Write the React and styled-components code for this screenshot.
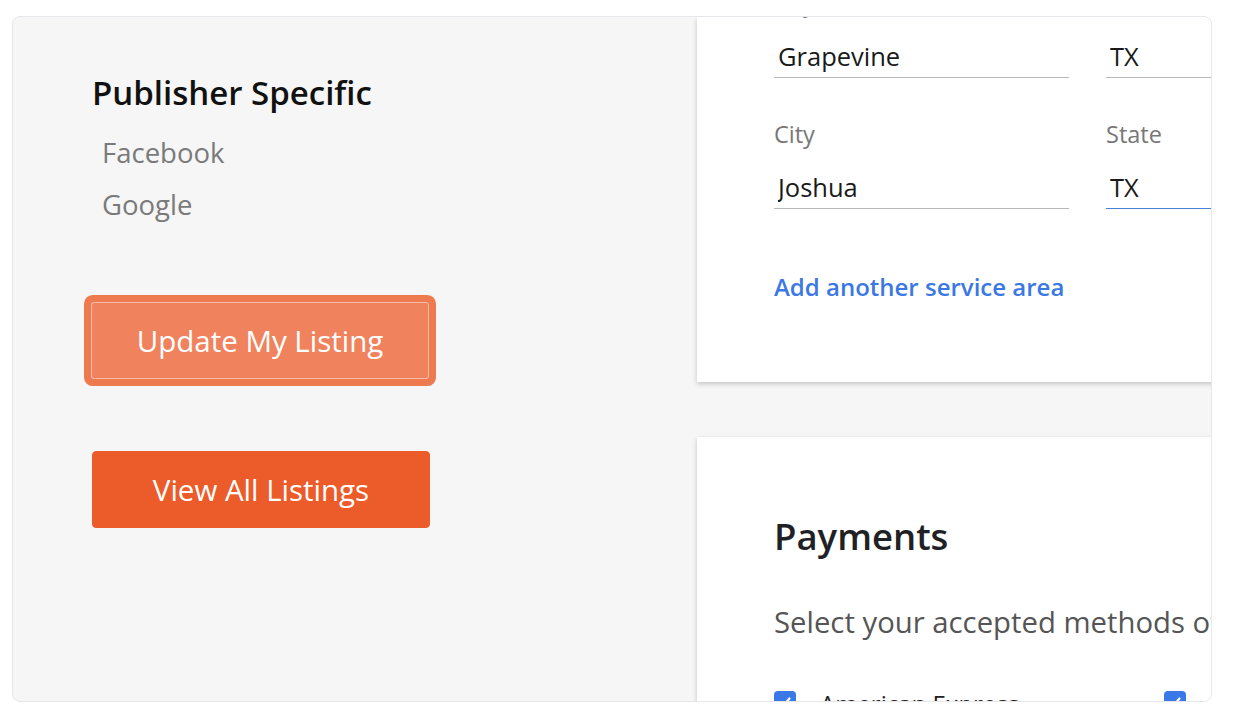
import React from 'react';
import styled, { createGlobalStyle } from 'styled-components';

const GlobalStyle = createGlobalStyle`
    html, body {
        margin: 0;
        padding: 0;
        background: #ffffff;
        font-family: "Open Sans", "Noto Sans", sans-serif;
    }
    * {
        box-sizing: border-box;
    }
`;

const serviceAreas = [
    { city: 'Grapevine', state: 'TX' },
    { city: 'Joshua', state: 'TX', focused: true },
];

const publishers = ['Facebook', 'Google'];

const paymentMethods = [
    ['American Express', 'Cash'],
];

const Check = () => (
    <svg width="14" height="14" viewBox="0 0 14 14" fill="none">
        <path d="M2.5 7.5l3 3 6-7" stroke="#fff" strokeWidth="2.2" strokeLinecap="round" strokeLinejoin="round" />
    </svg>
);

const ServiceField = ({ label, value, focused }) => (
    <Field>
        <Label>{label}</Label>
        <UnderlineInput value={value} readOnly $focused={focused} />
    </Field>
);

const App = () => {
    return (
        <>
            <GlobalStyle />
            <Frame>
                <Sidebar>
                    <SectionTitle>Publisher Specific</SectionTitle>
                    <PublisherList>
                        {publishers.map((p) => (
                            <PublisherItem key={p}>{p}</PublisherItem>
                        ))}
                    </PublisherList>
                    <Button $focused>Update My Listing</Button>
                    <Button>View All Listings</Button>
                </Sidebar>
                <Content>
                    <Card>
                        <ScrolledBody>
                            {serviceAreas.map((area, i) => (
                                <FieldRow key={i}>
                                    <ServiceField label="City" value={area.city} />
                                    <ServiceField label="State" value={area.state} focused={area.focused} />
                                </FieldRow>
                            ))}
                            <AddLink href="#">Add another service area</AddLink>
                        </ScrolledBody>
                    </Card>
                    <Card $second>
                        <CardTitle>Payments</CardTitle>
                        <CardIntro>Select your accepted methods of payment</CardIntro>
                        {paymentMethods.map((row, i) => (
                            <CheckRow key={i}>
                                {row.map((m) => (
                                    <CheckItem key={m}>
                                        <CheckBox>
                                            <Check />
                                        </CheckBox>
                                        {m}
                                    </CheckItem>
                                ))}
                            </CheckRow>
                        ))}
                    </Card>
                </Content>
            </Frame>
        </>
    );
};

const Frame = styled.div`
    margin: 16px 0 0 12px;
    width: 1200px;
    height: 686px;
    border: 1px solid #e7e7eb;
    border-radius: 8px;
    background: #f6f6f6;
    overflow: hidden;
    display: flex;
`;

const Sidebar = styled.div`
    flex: 0 0 684px;
    padding: 55px 0 0 79px;
    display: flex;
    flex-direction: column;
    align-items: flex-start;
`;

const SectionTitle = styled.h2`
    margin: 0;
    font-size: 33px;
    line-height: 42px;
    font-weight: 600;
    color: #111;
`;

const PublisherList = styled.div`
    margin: 13px 0 0 10px;
    display: flex;
    flex-direction: column;
`;

const PublisherItem = styled.div`
    font-size: 27.5px;
    line-height: 52px;
    color: #7a7a7a;
`;

const Button = styled.button`
    width: 338px;
    height: 77px;
    margin-top: ${(p) => (p.$focused ? '71px' : '72px')};
    margin-left: ${(p) => (p.$focused ? '-1px' : '0')};
    border-radius: ${(p) => (p.$focused ? '3px' : '4px')};
    font-family: inherit;
    font-size: 29.5px;
    color: #fff;
    cursor: pointer;
    background: ${(p) => (p.$focused ? '#f0835e' : '#ec5b2a')};
    border: 1px solid ${(p) => (p.$focused ? 'rgba(255,255,255,0.45)' : '#ec5b2a')};
    box-shadow: ${(p) => (p.$focused ? '0 0 0 7px #ee7a50' : 'none')};
`;

const Content = styled.div`
    flex: 0 0 600px;
    display: flex;
    flex-direction: column;
    gap: 55px;
`;

const Card = styled.section`
    background: #fff;
    width: 600px;
    box-shadow: 0 2px 5px rgba(0, 0, 0, 0.2);
    padding: ${(p) => (p.$second ? '76px 0 0 77px' : '0 0 80px 77px')};
    overflow: hidden;
    flex: 0 0 auto;
`;

const ScrolledBody = styled.div`
    margin-top: -29px;
`;

const FieldRow = styled.div`
    display: grid;
    grid-template-columns: 295px 1fr;
    column-gap: 37px;
    margin-bottom: 41px;
`;

const Field = styled.div`
    display: flex;
    flex-direction: column;
`;

const Label = styled.label`
    font-size: 23.5px;
    line-height: 30px;
    color: #777;
    margin-bottom: 16px;
`;

const UnderlineInput = styled.input`
    height: 44px;
    border: none;
    border-bottom: 1px solid ${(p) => (p.$focused ? '#4a7fd6' : '#b9b9b9')};
    background: transparent;
    outline: none;
    padding: 1px 4px 0;
    font-family: inherit;
    font-size: 25.5px;
    color: #1a1a1a;
    width: 100%;
`;

const AddLink = styled.a`
    display: block;
    margin-top: 63px;
    font-size: 24px;
    line-height: 30px;
    font-weight: 600;
    color: #3b78e4;
    text-decoration: none;
`;

const CardTitle = styled.h2`
    margin: 0;
    font-size: 36.5px;
    line-height: 46px;
    font-weight: 600;
    color: #202124;
`;

const CardIntro = styled.p`
    margin: 44px 0 0;
    font-size: 29.3px;
    line-height: 38px;
    color: #555;
    white-space: nowrap;
`;

const CheckRow = styled.div`
    display: grid;
    grid-template-columns: 390px 1fr;
    margin-top: 50px;
`;

const CheckItem = styled.label`
    display: flex;
    align-items: flex-start;
    gap: 24px;
    font-size: 24px;
    line-height: 26px;
    color: #222;
`;

const CheckBox = styled.span`
    flex: 0 0 22px;
    width: 22px;
    height: 22px;
    border-radius: 4px;
    background: #3b78e7;
    display: flex;
    align-items: center;
    justify-content: center;
`;

export default App;
